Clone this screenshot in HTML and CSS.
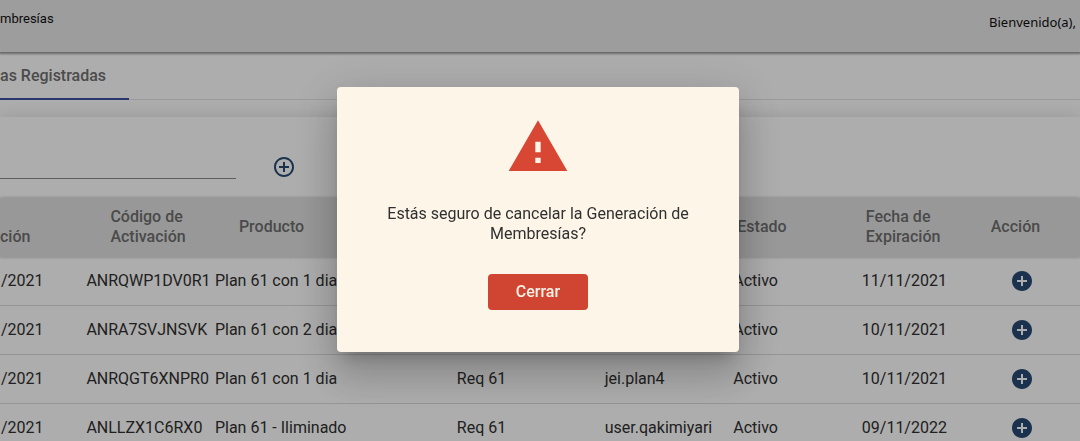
FILE: index.html
```html
<!DOCTYPE html>
<html lang="es">
<head>
<meta charset="utf-8">
<meta name="viewport" content="width=device-width, initial-scale=1">
<title>Membresías</title>
<link rel="stylesheet" href="styles.css">
</head>
<body>
<svg class="symbols" aria-hidden="true">
  <symbol id="add-circle" viewBox="0 0 24 24"><path d="M12 2C6.48 2 2 6.48 2 12s4.48 10 10 10 10-4.48 10-10S17.520 2 12 2zm5 11h-4v4h-2v-4H7v-2h4V7h2v4h4v2z"/></symbol>
</svg>
<header class="topbar">
  <span class="topbar-title">mbresías</span>
  <span class="topbar-user">Bienvenido(a),</span>
</header>
<nav class="tabs">
  <button class="tab" type="button">as Registradas</button>
</nav>
<main class="panel">
  <form class="search">
    <input class="search-input" type="text" aria-label="Buscar">
    <button class="icon-button" type="button" aria-label="Agregar">
      <svg viewBox="0 0 24 24"><path d="M13 7h-2v4H7v2h4v4h2v-4h4v-2h-4V7zm-1-5C6.480 2 2 6.480 2 12s4.480 10 10 10 10-4.480 10-10S17.520 2 12 2zm0 18c-4.410 0-8-3.590-8-8s3.590-8 8-8 8 3.590 8 8-3.590 8-8 8z"/></svg>
    </button>
  </form>
  <table class="grid">
    <colgroup>
      <col class="col-created"><col class="col-code"><col class="col-product"><col class="col-request">
      <col class="col-user"><col class="col-state"><col class="col-expiry"><col class="col-action">
    </colgroup>
    <thead>
      <tr>
        <th class="head-created" scope="col">ción</th>
        <th class="head-inset" scope="col">Código de<br>Activación</th>
        <th class="head-inset" scope="col">Producto</th>
        <td></td>
        <td></td>
        <th class="head-near" scope="col">Estado</th>
        <th class="head-near" scope="col">Fecha de<br>Expiración</th>
        <th class="head-action" scope="col">Acción</th>
      </tr>
    </thead>
    <tbody>
      <tr>
        <td class="created">/2021</td><td>ANRQWP1DV0R1</td><td>Plan 61 con 1 dia</td><td></td><td></td><td>Activo</td><td>11/11/2021</td>
        <td class="action"><button class="icon-button" type="button" aria-label="Ver"><svg><use href="#add-circle"/></svg></button></td>
      </tr>
      <tr>
        <td class="created">/2021</td><td>ANRA7SVJNSVK</td><td>Plan 61 con 2 dia</td><td></td><td></td><td>Activo</td><td>10/11/2021</td>
        <td class="action"><button class="icon-button" type="button" aria-label="Ver"><svg><use href="#add-circle"/></svg></button></td>
      </tr>
      <tr>
        <td class="created">/2021</td><td>ANRQGT6XNPR0</td><td>Plan 61 con 1 dia</td><td>Req 61</td><td>jei.plan4</td><td>Activo</td><td>10/11/2021</td>
        <td class="action"><button class="icon-button" type="button" aria-label="Ver"><svg><use href="#add-circle"/></svg></button></td>
      </tr>
      <tr>
        <td class="created">/2021</td><td>ANLLZX1C6RX0</td><td>Plan 61 - Iliminado</td><td>Req 61</td><td>user.qakimiyari</td><td>Activo</td><td>09/11/2022</td>
        <td class="action"><button class="icon-button" type="button" aria-label="Ver"><svg><use href="#add-circle"/></svg></button></td>
      </tr>
    </tbody>
  </table>
</main>
<div class="backdrop">
  <section class="dialog" role="alertdialog" aria-modal="true" aria-labelledby="dialog-text">
    <svg class="dialog-icon" viewBox="0 0 24 24" aria-hidden="true"><path d="M1 21h22L12 2 1 21zm12-3h-2v-2h2v2zm0-4h-2v-4h2v4z"/></svg>
    <p class="dialog-text" id="dialog-text">Estás seguro de cancelar la Generación de Membresías?</p>
    <button class="dialog-button" type="button">Cerrar</button>
  </section>
</div>
</body>
</html>
```
FILE: styles.css
```css
* {
  box-sizing: border-box;
}

html {
  height: 100%;
}

body {
  height: 100%;
  margin: 0;
  overflow: hidden;
  background: #fff;
  color: #303030;
  font: 16px/20px Roboto, "Liberation Sans", sans-serif;
}

button,
input {
  padding: 0;
  border: 0;
  background: none;
  color: inherit;
  font: inherit;
}

.symbols {
  display: none;
}

.topbar {
  position: relative;
  display: flex;
  justify-content: space-between;
  align-items: flex-start;
  height: 52px;
  padding: 9px 4px 0 0;
  background: #e8e8e8;
  box-shadow: 0 1px 2px 1px rgba(0, 0, 0, .4);
  color: #101010;
  font-size: 13px;
}

.topbar-user {
  padding-top: 3px;
  font-family: "Noto Sans", sans-serif;
}

.tabs {
  height: 48px;
  border-bottom: 1px solid #e4e4e4;
}

.tab {
  width: 129px;
  height: 48px;
  padding-top: 2px;
  border-bottom: 2px solid #3f51a0;
  color: #707070;
  font-weight: 500;
  text-align: left;
}

.panel {
  margin-top: 17px;
  box-shadow: 0 0 16px rgba(0, 0, 0, .14);
}

.search {
  display: flex;
  align-items: flex-start;
  gap: 36px;
  height: 81px;
  padding-top: 38px;
}

.search-input {
  width: 236px;
  height: 24px;
  border-bottom: 1px solid #888;
}

.icon-button {
  display: block;
  width: 24px;
  height: 24px;
  color: #274b72;
}

.icon-button svg {
  display: block;
  width: 24px;
  height: 24px;
  fill: currentColor;
}

.grid {
  width: 100%;
  table-layout: fixed;
  border-collapse: separate;
  border-spacing: 0;
  white-space: nowrap;
}

.col-created { width: 8%; }
.col-code { width: 11.9%; }
.col-product { width: 22.4%; }
.col-request { width: 13.7%; }
.col-user { width: 11.9%; }
.col-state { width: 11.9%; }
.col-expiry { width: 11.2%; }
.col-action { width: 9%; }

.grid thead th,
.grid thead td {
  height: 59px;
  padding: 0 0 2px;
  background: #e1e1e1;
  color: #6e6e6e;
  font-weight: 500;
  text-align: left;
}

.grid thead {
  box-shadow: 0 0 3px rgba(0, 0, 0, .3);
}

.grid thead .head-created {
  padding-bottom: 10px;
  vertical-align: bottom;
}

.grid thead .head-inset { padding-left: 24px; }
.grid thead .head-near { padding-left: 4px; }
.grid thead .head-action { padding-left: 8px; }

.grid tbody td {
  height: 49px;
  padding: 0;
  border-bottom: 1px solid #dcdcdc;
}

.grid tbody .created { padding-left: 1px; }
.grid tbody .action { padding-left: 27px; }

.backdrop {
  position: fixed;
  inset: 0;
  display: flex;
  justify-content: center;
  align-items: center;
  padding: 0 4px 2px 0;
  background: rgba(0, 0, 0, .32);
}

.dialog {
  display: flex;
  flex-direction: column;
  align-items: center;
  width: 402px;
  max-width: 100%;
  padding: 28px 40px 42px;
  border-radius: 4px;
  background: #fcf5e8;
  box-shadow: 0 11px 15px -7px rgba(0, 0, 0, .2), 0 24px 38px 3px rgba(0, 0, 0, .14), 0 9px 46px 8px rgba(0, 0, 0, .12);
}

.dialog-icon {
  width: 64px;
  height: 64px;
  fill: #d84634;
}

.dialog-text {
  margin: 25px 0 30px;
  text-align: center;
}

.dialog-button {
  width: 100px;
  height: 36px;
  border-radius: 4px;
  background: #d04432;
  color: #fdf0e6;
  font-weight: 500;
}
```
